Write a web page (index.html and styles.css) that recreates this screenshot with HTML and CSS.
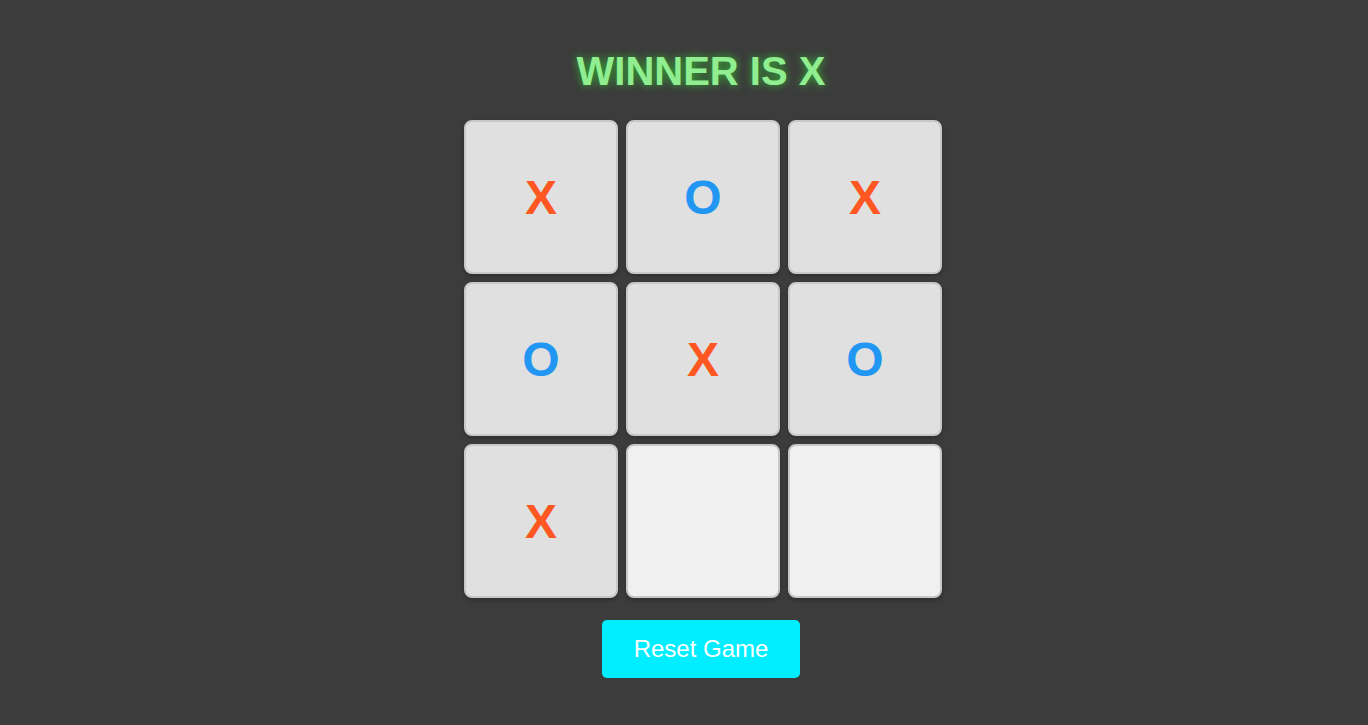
FILE: index.html
```html
<!DOCTYPE html>
<html lang="en">
<head>
<meta charset="utf-8">
<title>Tic Tac Toe</title>
<link rel="stylesheet" href="styles.css">
</head>
<body>
<main class="game">
  <h1 class="status">WINNER IS X</h1>
  <div class="board">
    <button class="cell filled x">X</button>
    <button class="cell filled o">O</button>
    <button class="cell filled x">X</button>
    <button class="cell filled o">O</button>
    <button class="cell filled x">X</button>
    <button class="cell filled o">O</button>
    <button class="cell filled x">X</button>
    <button class="cell"></button>
    <button class="cell"></button>
  </div>
  <button class="reset">Reset Game</button>
</main>
</body>
</html>
```
FILE: styles.css
```css
html, body {
  margin: 0;
  padding: 0;
}
body {
  background: #3c3c3c;
  font-family: "Liberation Sans", Arial, sans-serif;
  min-height: 725px;
}
.game {
  display: flex;
  flex-direction: column;
  align-items: center;
  padding: 48px 0 0 34px;
}
.status {
  margin: 0;
  font-size: 40px;
  line-height: 46px;
  font-weight: bold;
  color: #90ee90;
  text-shadow: 0 0 8px rgba(50, 190, 50, 0.95);
}
.board {
  margin: 26px 0 0 4px;
  display: grid;
  grid-template-columns: repeat(3, 154px);
  grid-auto-rows: 154px;
  gap: 8px;
}
.cell {
  box-sizing: border-box;
  width: 154px;
  height: 154px;
  border: 2px solid #c8c8c8;
  border-radius: 8px;
  background: #f0f0f0;
  box-shadow: 0 2px 4px rgba(0, 0, 0, 0.25);
  font-family: "Liberation Sans", Arial, sans-serif;
  font-size: 48px;
  font-weight: bold;
  padding: 0;
  display: flex;
  align-items: center;
  justify-content: center;
}
.cell.filled {
  background: #e0e0e0;
}
.cell.x {
  color: #ff5722;
}
.cell.o {
  color: #2196f3;
}
.reset {
  margin-top: 22px;
  padding: 15px 32px;
  border: none;
  border-radius: 5px;
  background: #00eeff;
  color: #ffffff;
  font-family: "Liberation Sans", Arial, sans-serif;
  font-size: 24px;
  line-height: 28px;
}
```
